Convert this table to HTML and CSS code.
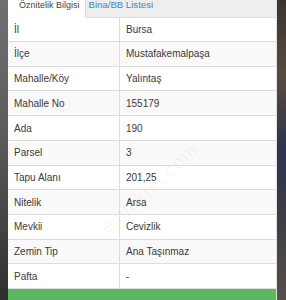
FILE: index.html
```html
<!DOCTYPE html>
<html lang="tr">
<head>
<meta charset="utf-8">
<link rel="stylesheet" href="styles.css">
</head>
<body>
<div class="panel">
  <div class="tabs">
    <div class="tab active">Öznitelik Bilgisi</div>
    <div class="tab">Bina/BB Listesi</div>
  </div>
  <div class="table">
    <div class="row"><div class="k">İl</div><div class="v">Bursa</div></div>
    <div class="row"><div class="k">İlçe</div><div class="v">Mustafakemalpaşa</div></div>
    <div class="row"><div class="k">Mahalle/Köy</div><div class="v">Yalıntaş</div></div>
    <div class="row"><div class="k">Mahalle No</div><div class="v">155179</div></div>
    <div class="row"><div class="k">Ada</div><div class="v">190</div></div>
    <div class="row"><div class="k">Parsel</div><div class="v">3</div></div>
    <div class="row"><div class="k">Tapu Alanı</div><div class="v">201,25</div></div>
    <div class="row"><div class="k">Nitelik</div><div class="v">Arsa</div></div>
    <div class="row"><div class="k">Mevkii</div><div class="v">Cevizlik</div></div>
    <div class="row"><div class="k">Zemin Tip</div><div class="v">Ana Taşınmaz</div></div>
    <div class="row"><div class="k">Pafta</div><div class="v">-</div></div>
  </div>
  <div class="bar"></div>
  <div class="watermark">emlakjet.com</div>
</div>
</body>
</html>
```
FILE: styles.css
```css
html, body {
  margin: 0;
  padding: 0;
}
body {
  width: 286px;
  height: 300px;
  overflow: hidden;
  font-family: "Liberation Sans", Arial, sans-serif;
  color: #3a3a3a;
  background:
    linear-gradient(180deg, #707070 0%, #5e5e5e 40%, #444 75%, #2e2e2e 100%) left top / 8px 100% no-repeat,
    linear-gradient(180deg, #3a3430 0%, #5a4a3e 25%, #2c3450 50%, #3c3c44 70%, #56504a 100%) right top / 10px 100% no-repeat,
    #444;
}
.panel {
  position: relative;
  margin-left: 8px;
  width: 268px;
  height: 300px;
  background: #fff;
  border-right: 1px solid #e2e2e2;
  overflow: hidden;
}
.tabs {
  display: flex;
  height: 17px;
  background: #eeeeee;
  border-bottom: 1px solid #dddddd;
}
.tab {
  font-size: 9.6px;
  line-height: 10px;
  white-space: nowrap;
  padding: 0 4px 0 3px;
  color: #3a87c8;
}
.tab.active {
  font-size: 9px;
  background: #fff;
  color: #444;
  padding: 0 5px 0 11px;
  border-right: 1px solid #dddddd;
  margin-bottom: -1px;
  height: 18px;
}
.table {
  display: flex;
  flex-direction: column;
}
.row {
  display: grid;
  grid-template-columns: 112px 1fr;
  height: 23.73px;
  border-bottom: 1px solid #dddddd;
  font-size: 10px;
}
.row:nth-child(even) {
  background: #f9f9f9;
}
.row:first-child {
  height: 23px;
}
.k {
  padding-left: 6px;
  border-right: 1px solid #dddddd;
  display: flex;
  align-items: center;
}
.v {
  padding-left: 6px;
  display: flex;
  align-items: center;
}
.bar {
  height: 12px;
  background: #5cb85c;
}
.watermark {
  position: absolute;
  left: 88px;
  top: 222px;
  font-size: 19px;
  letter-spacing: 1px;
  color: rgba(0, 0, 0, 0.045);
  transform: rotate(-42deg);
  transform-origin: left top;
}
```
